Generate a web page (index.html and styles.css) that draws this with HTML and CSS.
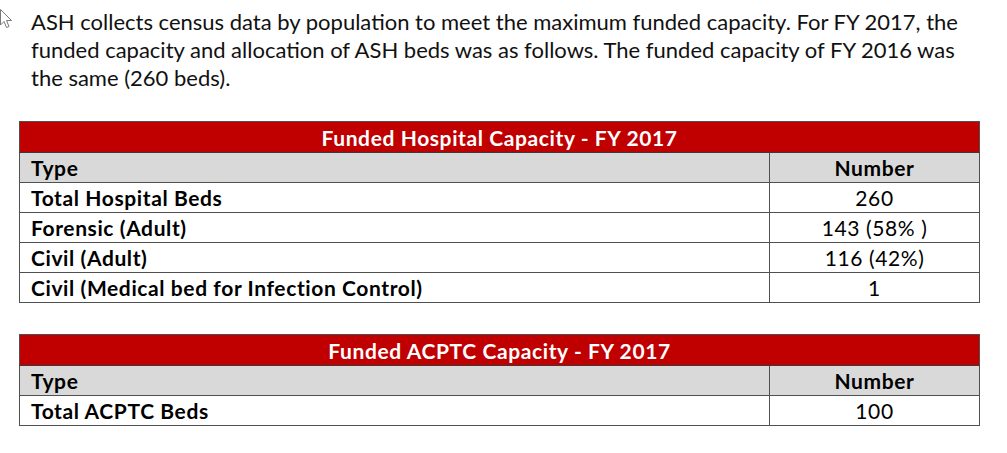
FILE: index.html
```html
<!DOCTYPE html>
<html>
<head>
<meta charset="utf-8">
<link rel="stylesheet" href="styles.css">
</head>
<body>
<svg class="cursor" width="14" height="22" viewBox="0 0 14 22"><path d="M0.5 0.5 L0.5 16 L4 12.5 L6.5 18.5 L9 17.5 L6.5 11.5 L11.5 11.5 Z" fill="#fff" stroke="#7a7a7a" stroke-width="1"/></svg>
<main class="page">
  <p class="intro">ASH collects census data by population to meet the maximum funded capacity. For FY 2017, the funded capacity and allocation of ASH beds was as follows. The funded capacity of FY 2016 was the same (260 beds).</p>

  <table class="cap">
    <colgroup><col class="c-type"><col class="c-num"></colgroup>
    <tr class="title"><th colspan="2">Funded Hospital Capacity - FY 2017</th></tr>
    <tr class="head"><th class="type">Type</th><th class="num">Number</th></tr>
    <tr><td class="type">Total Hospital Beds</td><td class="num">260</td></tr>
    <tr><td class="type">Forensic (Adult)</td><td class="num">143 (58% )</td></tr>
    <tr><td class="type">Civil (Adult)</td><td class="num">116 (42%)</td></tr>
    <tr><td class="type">Civil (Medical bed for Infection Control)</td><td class="num">1</td></tr>
  </table>

  <table class="cap second">
    <colgroup><col class="c-type"><col class="c-num"></colgroup>
    <tr class="title"><th colspan="2">Funded ACPTC Capacity - FY 2017</th></tr>
    <tr class="head"><th class="type">Type</th><th class="num">Number</th></tr>
    <tr><td class="type">Total ACPTC Beds</td><td class="num">100</td></tr>
  </table>
</main>
</body>
</html>
```

FILE: styles.css
```css
html, body {
  margin: 0;
  padding: 0;
  background: #fff;
}
body {
  font-family: Lato, "Open Sans", sans-serif;
  color: #000;
  position: relative;
}
.cursor {
  position: absolute;
  left: 0;
  top: 9px;
}
.page {
  padding: 8px 0 0 19px;
  width: 960px;
}
.intro {
  margin: 0 0 29px 12px;
  font-size: 22px;
  line-height: 28px;
  width: 948px;
  color: #111;
}
.cap {
  border-collapse: collapse;
  width: 960px;
  table-layout: fixed;
  border: 1px solid #3a3a3a;
  font-size: 21px;
  letter-spacing: 0.6px;
}
.cap.second {
  margin-top: 31px;
}
.c-type { width: 750px; }
.c-num { width: 210px; }
.cap th, .cap td {
  height: 29px;
  padding: 0 0 0 11px;
  border: 1px solid #505050;
  line-height: 29px;
  box-sizing: border-box;
}
.cap .title th {
  background: #c00000;
  color: #fff;
  font-weight: 700;
  text-align: center;
  height: 31px;
  padding: 0;
  border-bottom: 1px solid #3a3a3a;
}
.cap .head th {
  background: #d9d9d9;
  font-weight: 700;
}
.cap .type {
  text-align: left;
  font-weight: 700;
}
.cap .num {
  text-align: center;
  padding: 0;
  font-weight: 400;
}
.cap .head .num {
  font-weight: 700;
}
```
